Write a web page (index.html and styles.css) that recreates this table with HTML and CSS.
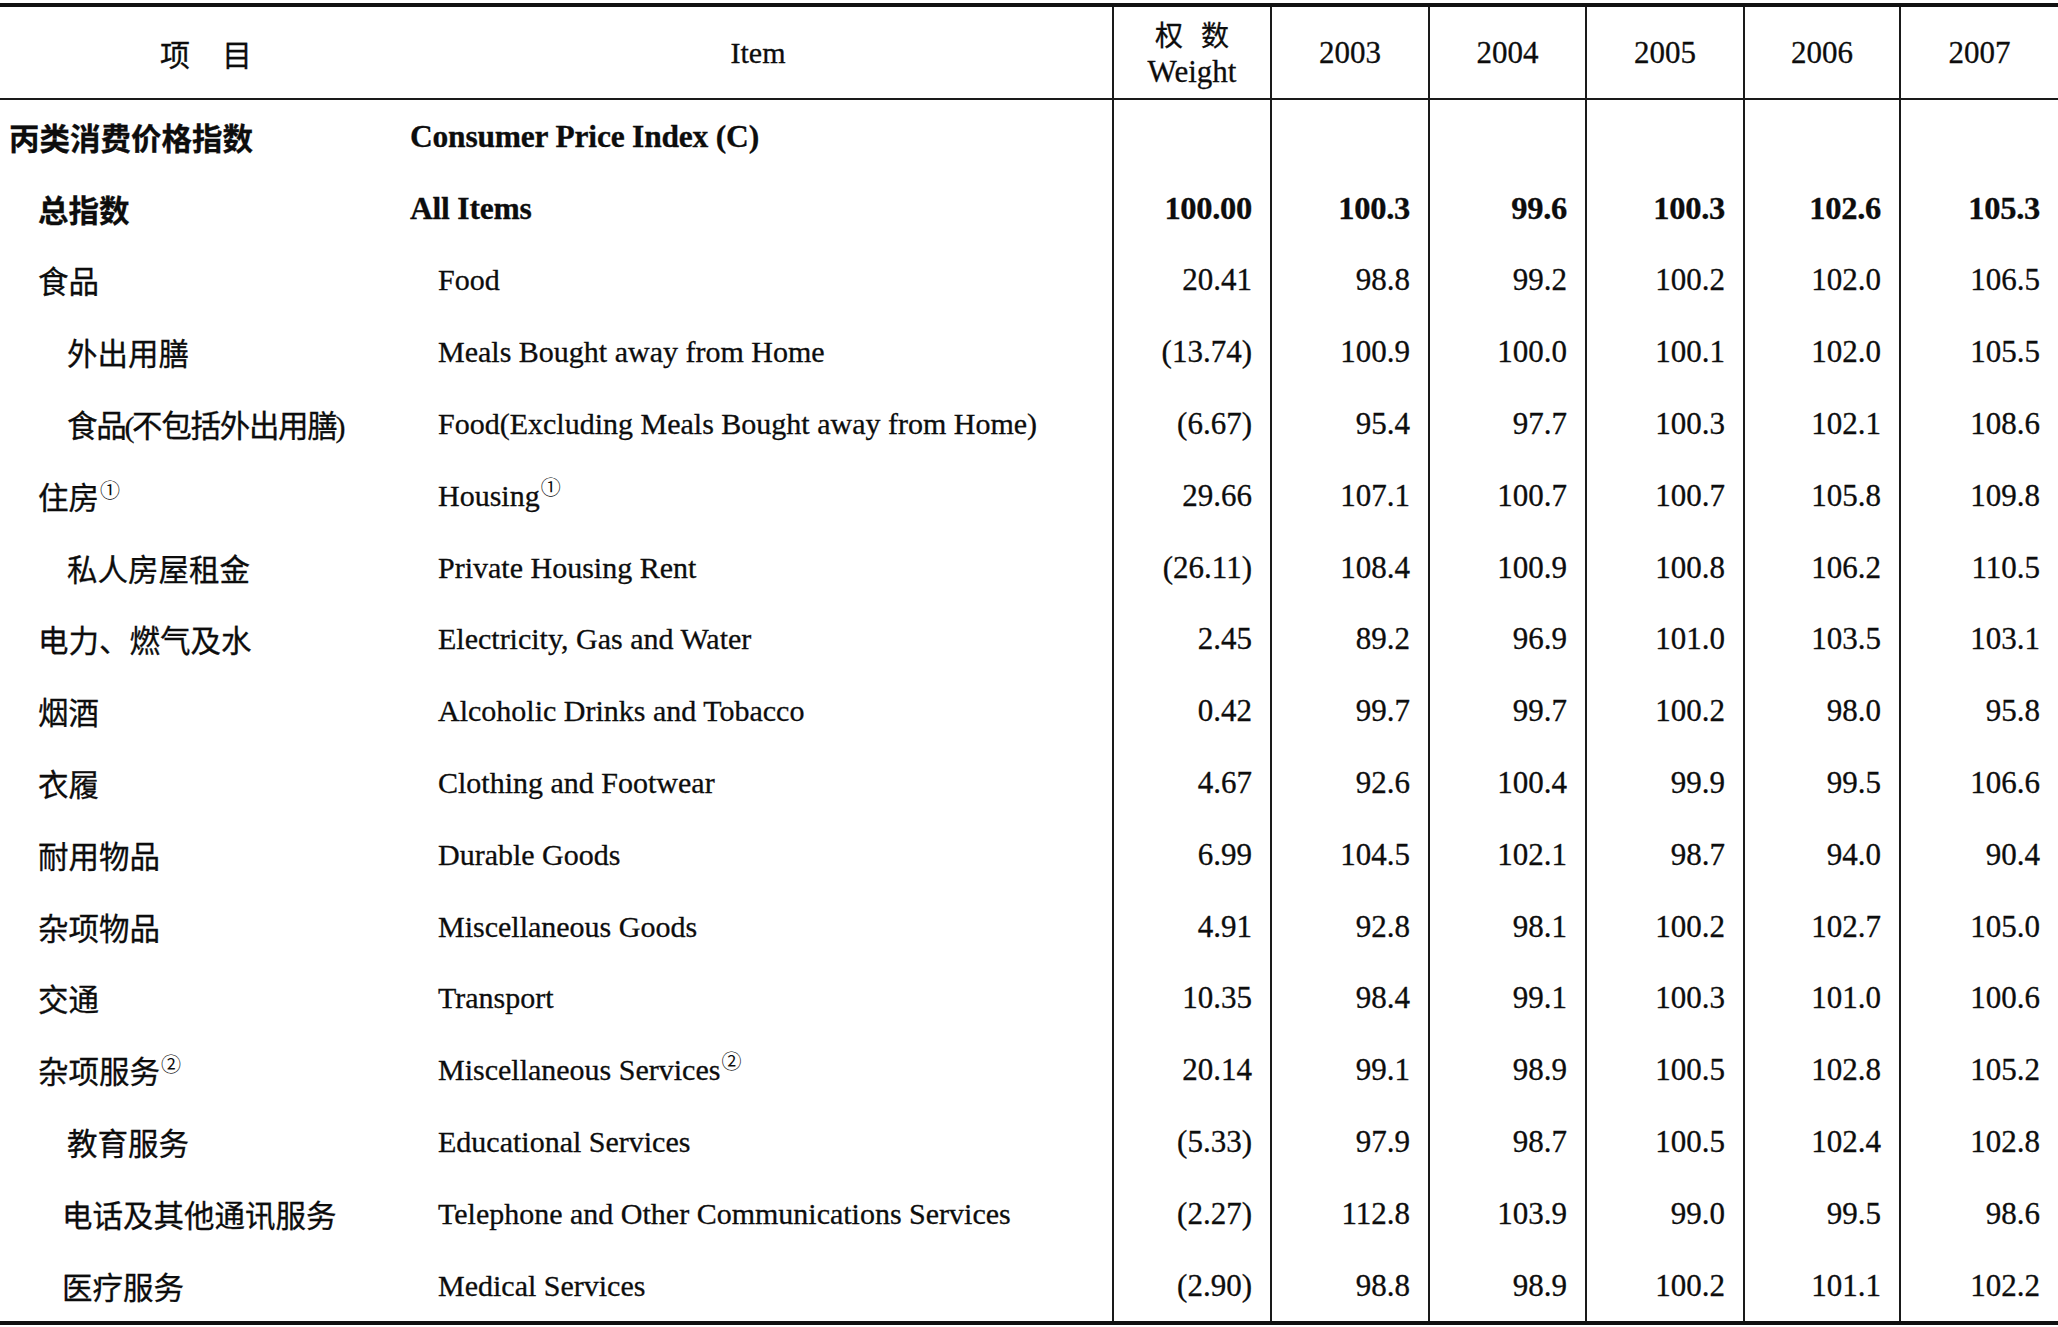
FILE: index.html
```html
<!DOCTYPE html>
<html lang="zh-CN">
<head>
<meta charset="utf-8">
<title>丙类消费价格指数 Consumer Price Index (C)</title>
<link rel="stylesheet" href="styles.css">
</head>
<body>
<table class="cpi">
  <colgroup>
    <col class="col-zh">
    <col class="col-en">
    <col class="col-a">
    <col class="col-a">
    <col class="col-b">
    <col class="col-a">
    <col class="col-c">
    <col class="col-d">
  </colgroup>
  <thead>
    <tr>
      <th class="h-zh">项<span class="wide-gap"></span>目</th>
      <th class="h-en">Item</th>
      <th class="h-num h-weight"><span class="h-weight-zh">权<span class="gap"></span>数</span><span class="h-weight-en">Weight</span></th>
      <th class="h-num">2003</th>
      <th class="h-num">2004</th>
      <th class="h-num">2005</th>
      <th class="h-num">2006</th>
      <th class="h-num">2007</th>
    </tr>
  </thead>
  <tbody>
    <tr class="bold">
      <td class="zh l0">丙类消费价格指数</td>
      <td class="en e0">Consumer Price Index (C)</td>
      <td class="num"></td><td class="num"></td><td class="num"></td><td class="num"></td><td class="num"></td><td class="num"></td>
    </tr>
    <tr class="bold">
      <td class="zh l1">总指数</td>
      <td class="en e0">All Items</td>
      <td class="num">100.00</td><td class="num">100.3</td><td class="num">99.6</td><td class="num">100.3</td><td class="num">102.6</td><td class="num">105.3</td>
    </tr>
    <tr>
      <td class="zh l1">食品</td>
      <td class="en e1">Food</td>
      <td class="num">20.41</td><td class="num">98.8</td><td class="num">99.2</td><td class="num">100.2</td><td class="num">102.0</td><td class="num">106.5</td>
    </tr>
    <tr>
      <td class="zh l2">外出用膳</td>
      <td class="en e1">Meals Bought away from Home</td>
      <td class="num">(13.74)</td><td class="num">100.9</td><td class="num">100.0</td><td class="num">100.1</td><td class="num">102.0</td><td class="num">105.5</td>
    </tr>
    <tr>
      <td class="zh l2 tight">食品<span class="paren">(</span>不包括外出用膳<span class="paren">)</span></td>
      <td class="en e1">Food(Excluding Meals Bought away from Home)</td>
      <td class="num">(6.67)</td><td class="num">95.4</td><td class="num">97.7</td><td class="num">100.3</td><td class="num">102.1</td><td class="num">108.6</td>
    </tr>
    <tr>
      <td class="zh l1">住房<sup class="note">①</sup></td>
      <td class="en e1">Housing<sup class="note">①</sup></td>
      <td class="num">29.66</td><td class="num">107.1</td><td class="num">100.7</td><td class="num">100.7</td><td class="num">105.8</td><td class="num">109.8</td>
    </tr>
    <tr>
      <td class="zh l2">私人房屋租金</td>
      <td class="en e1">Private Housing Rent</td>
      <td class="num">(26.11)</td><td class="num">108.4</td><td class="num">100.9</td><td class="num">100.8</td><td class="num">106.2</td><td class="num">110.5</td>
    </tr>
    <tr>
      <td class="zh l1">电力、燃气及水</td>
      <td class="en e1">Electricity, Gas and Water</td>
      <td class="num">2.45</td><td class="num">89.2</td><td class="num">96.9</td><td class="num">101.0</td><td class="num">103.5</td><td class="num">103.1</td>
    </tr>
    <tr>
      <td class="zh l1">烟酒</td>
      <td class="en e1">Alcoholic Drinks and Tobacco</td>
      <td class="num">0.42</td><td class="num">99.7</td><td class="num">99.7</td><td class="num">100.2</td><td class="num">98.0</td><td class="num">95.8</td>
    </tr>
    <tr>
      <td class="zh l1">衣履</td>
      <td class="en e1">Clothing and Footwear</td>
      <td class="num">4.67</td><td class="num">92.6</td><td class="num">100.4</td><td class="num">99.9</td><td class="num">99.5</td><td class="num">106.6</td>
    </tr>
    <tr>
      <td class="zh l1">耐用物品</td>
      <td class="en e1">Durable Goods</td>
      <td class="num">6.99</td><td class="num">104.5</td><td class="num">102.1</td><td class="num">98.7</td><td class="num">94.0</td><td class="num">90.4</td>
    </tr>
    <tr>
      <td class="zh l1">杂项物品</td>
      <td class="en e1">Miscellaneous Goods</td>
      <td class="num">4.91</td><td class="num">92.8</td><td class="num">98.1</td><td class="num">100.2</td><td class="num">102.7</td><td class="num">105.0</td>
    </tr>
    <tr>
      <td class="zh l1">交通</td>
      <td class="en e1">Transport</td>
      <td class="num">10.35</td><td class="num">98.4</td><td class="num">99.1</td><td class="num">100.3</td><td class="num">101.0</td><td class="num">100.6</td>
    </tr>
    <tr>
      <td class="zh l1">杂项服务<sup class="note">②</sup></td>
      <td class="en e1">Miscellaneous Services<sup class="note">②</sup></td>
      <td class="num">20.14</td><td class="num">99.1</td><td class="num">98.9</td><td class="num">100.5</td><td class="num">102.8</td><td class="num">105.2</td>
    </tr>
    <tr>
      <td class="zh l2">教育服务</td>
      <td class="en e1">Educational Services</td>
      <td class="num">(5.33)</td><td class="num">97.9</td><td class="num">98.7</td><td class="num">100.5</td><td class="num">102.4</td><td class="num">102.8</td>
    </tr>
    <tr>
      <td class="zh l2b">电话及其他通讯服务</td>
      <td class="en e1">Telephone and Other Communications Services</td>
      <td class="num">(2.27)</td><td class="num">112.8</td><td class="num">103.9</td><td class="num">99.0</td><td class="num">99.5</td><td class="num">98.6</td>
    </tr>
    <tr>
      <td class="zh l2b">医疗服务</td>
      <td class="en e1">Medical Services</td>
      <td class="num">(2.90)</td><td class="num">98.8</td><td class="num">98.9</td><td class="num">100.2</td><td class="num">101.1</td><td class="num">102.2</td>
    </tr>
  </tbody>
</table>
</body>
</html>
```
FILE: styles.css
```css
html, body {
  margin: 0;
  padding: 0;
  background: #ffffff;
}

body {
  padding-top: 3px;
  color: #0d0d0d;
  font-family: "Liberation Serif", "Noto Sans CJK SC", serif;
}

.cpi {
  width: 2058px;
  table-layout: fixed;
  border-collapse: separate;
  border-spacing: 0;
  border-top: 4px solid #111111;
  border-bottom: 4px solid #111111;
  -webkit-text-stroke: 0.3px #0d0d0d;
}

.col-zh { width: 410px; }
.col-en { width: 702px; }
.col-a { width: 158px; }
.col-b { width: 157px; }
.col-c { width: 156px; }
.col-d { width: 159px; }

.cpi th {
  height: 91px;
  padding: 0;
  font-weight: normal;
  border-bottom: 2px solid #1a1a1a;
  vertical-align: middle;
}

.cpi .h-zh {
  font-family: "Noto Sans CJK SC", sans-serif;
  font-size: 30px;
  text-align: center;
  padding-left: 2px;
}

.wide-gap {
  display: inline-block;
  width: 32px;
}

.cpi .h-en {
  font-family: "Liberation Serif", serif;
  font-size: 30px;
  text-align: center;
  padding-right: 6px;
}

.cpi .h-num {
  font-family: "Liberation Serif", serif;
  font-size: 31px;
  text-align: center;
  border-left: 2px solid #1a1a1a;
}

.h-weight-zh,
.h-weight-en {
  display: block;
  line-height: 38px;
}

.h-weight-zh {
  font-family: "Noto Sans CJK SC", sans-serif;
  font-size: 28px;
}

.gap {
  display: inline-block;
  width: 18px;
}

.cpi td {
  height: 69.8px;
  padding: 2px 0 0;
  vertical-align: middle;
  white-space: nowrap;
}

.cpi .zh {
  font-family: "Noto Sans CJK SC", sans-serif;
  font-size: 30.5px;
}

.cpi .tight {
  letter-spacing: -1.3px;
}

.paren {
  font-family: "Liberation Serif", serif;
  font-size: 30px;
  margin: 0 -1px;
}

.cpi .l0 { padding-left: 9px; }
.cpi .l1 { padding-left: 38px; }
.cpi .l2 { padding-left: 67px; }
.cpi .l2b { padding-left: 62px; }

.cpi .en {
  font-family: "Liberation Serif", serif;
  font-size: 30px;
}

.cpi .e0 { padding-left: 0; }
.cpi .e1 { padding-left: 28px; }

.cpi .num {
  font-family: "Liberation Serif", serif;
  font-size: 31px;
  text-align: right;
  padding-right: 18px;
  border-left: 2px solid #1a1a1a;
}

.cpi .bold td {
  font-weight: bold;
}

.cpi .bold .en {
  font-size: 31.5px;
  letter-spacing: -0.2px;
}

.cpi .bold .num {
  font-size: 32.5px;
  letter-spacing: -0.3px;
}

.note {
  font-family: "Noto Sans CJK SC", sans-serif;
  font-size: 20px;
  font-weight: normal;
  vertical-align: 11px;
  line-height: 0;
  margin-left: 1px;
  letter-spacing: 0;
  -webkit-text-stroke: 0;
}
```
